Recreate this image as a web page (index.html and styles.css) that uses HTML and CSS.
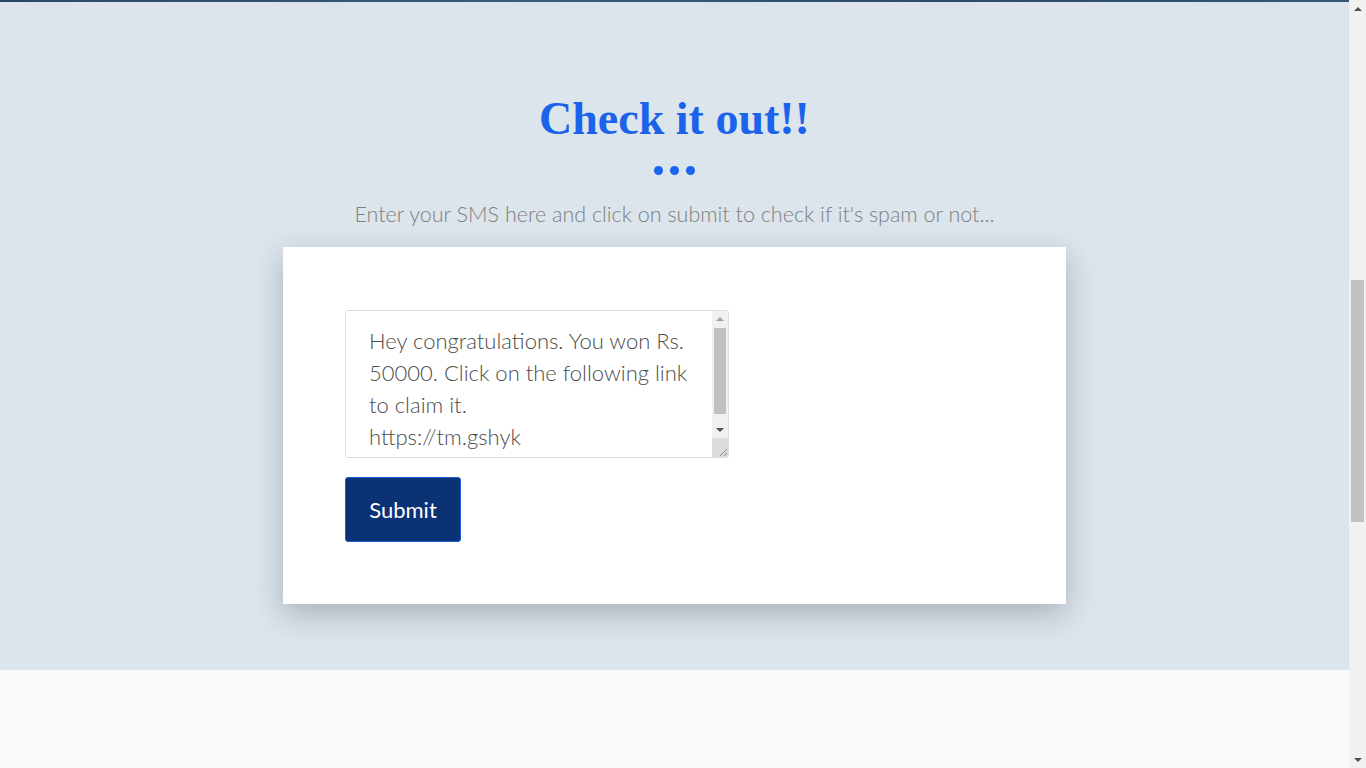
FILE: index.html
```html
<!DOCTYPE html>
<html lang="en">
<head>
<meta charset="utf-8">
<title>Spam Checker</title>
<link rel="stylesheet" href="styles.css">
</head>
<body>
<div class="page">
  <header class="hero"></header>
  <section class="check">
    <h2 class="check-title">Check it out!!</h2>
    <div class="dots"><span></span><span></span><span></span></div>
    <p class="check-sub">Enter your SMS here and click on submit to check if it's spam or not...</p>
    <div class="card">
      <form class="sms-form">
        <div class="sms-box">
          <textarea class="sms-input" name="message">Hey congratulations. You won Rs. 50000. Click on the following link to claim it.
https://tm.gshyk</textarea>
          <div class="mini-bar">
            <div class="mini-btn"><span class="tri-up tri-light"></span></div>
            <div class="mini-track"><div class="mini-thumb"></div></div>
            <div class="mini-btn"><span class="tri-down"></span></div>
            <div class="mini-corner">
              <svg width="12" height="12" viewBox="0 0 12 12"><path d="M11 4 L4 11 M11 8 L8 11" stroke="#8a8a8a" stroke-width="1"/></svg>
            </div>
          </div>
        </div>
        <button type="button" class="btn-submit">Submit</button>
      </form>
    </div>
  </section>
  <footer class="footer"></footer>
</div>
<aside class="scrollbar">
  <div class="sb-btn"><span class="tri-up"></span></div>
  <div class="sb-track"><div class="sb-thumb"></div></div>
  <div class="sb-btn"><span class="tri-down"></span></div>
</aside>
</body>
</html>
```
FILE: styles.css
```css
html, body {
  margin: 0;
  padding: 0;
}
body {
  font-family: "Lato", "Noto Sans", sans-serif;
  background: #f9f9f9;
  display: flex;
  height: 100vh;
  overflow: hidden;
}
.page {
  flex: 1;
  display: flex;
  flex-direction: column;
  min-width: 0;
}
.hero {
  height: 2px;
  flex: none;
  background: linear-gradient(90deg, #2a4866, #3b5b7c 40%, #2b4a68 70%, #365676);
}
.check {
  background: #dce4ec;
  padding: 88px 0 66px;
  display: flex;
  flex-direction: column;
  align-items: center;
}
.check-title {
  margin: 0;
  font-family: "Liberation Serif", "DejaVu Serif", serif;
  font-weight: 700;
  font-size: 46px;
  line-height: 58px;
  color: #1b63ea;
}
.dots {
  display: flex;
  gap: 7px;
  margin-top: 18px;
}
.dots span {
  width: 9px;
  height: 9px;
  border-radius: 50%;
  background: #1b63ea;
}
.check-sub {
  margin: 25px 0 19px;
  font-size: 21.5px;
  line-height: 28px;
  color: #808080;
  font-weight: 300;
}
.card {
  width: 783px;
  box-sizing: border-box;
  background: #fff;
  padding: 63px 62px 62px;
  box-shadow: 0 10px 28px rgba(40, 50, 60, 0.28);
}
.sms-form {
  display: flex;
  flex-direction: column;
  align-items: flex-start;
  gap: 19px;
}
.sms-box {
  width: 384px;
  height: 148px;
  box-sizing: border-box;
  border: 1px solid #dcdcdc;
  border-radius: 3px;
  display: flex;
  overflow: hidden;
}
.sms-input {
  flex: 1;
  min-width: 0;
  box-sizing: border-box;
  padding: 14px 10px 0 23px;
  border: none;
  outline: none;
  resize: none;
  overflow: hidden;
  font-family: "Lato", "Noto Sans", sans-serif;
  font-size: 22px;
  line-height: 32px;
  color: #4d4d4d;
  font-weight: 300;
}
.mini-bar {
  width: 16px;
  flex: none;
  display: flex;
  flex-direction: column;
  background: #f1f1f1;
}
.mini-btn {
  height: 16px;
  flex: none;
  display: flex;
  align-items: center;
  justify-content: center;
}
.mini-track {
  flex: 1;
  padding: 1px 2px 8px;
  display: flex;
}
.mini-thumb {
  flex: 1;
  background: #c1c1c1;
}
.mini-corner {
  height: 19px;
  flex: none;
  background: #dcdcdc;
  display: flex;
  align-items: flex-end;
  justify-content: flex-end;
}
.tri-up,
.tri-down {
  width: 0;
  height: 0;
  border-left: 4px solid transparent;
  border-right: 4px solid transparent;
}
.tri-up {
  border-bottom: 4px solid #505050;
}
.tri-down {
  border-top: 4px solid #505050;
}
.tri-light {
  border-bottom-color: #a3a3a3;
}
.btn-submit {
  width: 116px;
  height: 65px;
  background: #0b3275;
  border: 1px solid #2059d0;
  border-radius: 3px;
  color: #fff;
  font-family: "Lato", "Noto Sans", sans-serif;
  font-size: 22px;
  cursor: pointer;
}
.footer {
  flex: 1;
  background: #f9f9f9;
}
.scrollbar {
  width: 17px;
  flex: none;
  display: flex;
  flex-direction: column;
  background: #f1f1f1;
}
.sb-btn {
  height: 17px;
  flex: none;
  display: flex;
  align-items: center;
  justify-content: center;
}
.sb-track {
  flex: 1;
  padding: 263px 2px 0;
}
.sb-thumb {
  height: 242px;
  background: #c1c1c1;
}
```
